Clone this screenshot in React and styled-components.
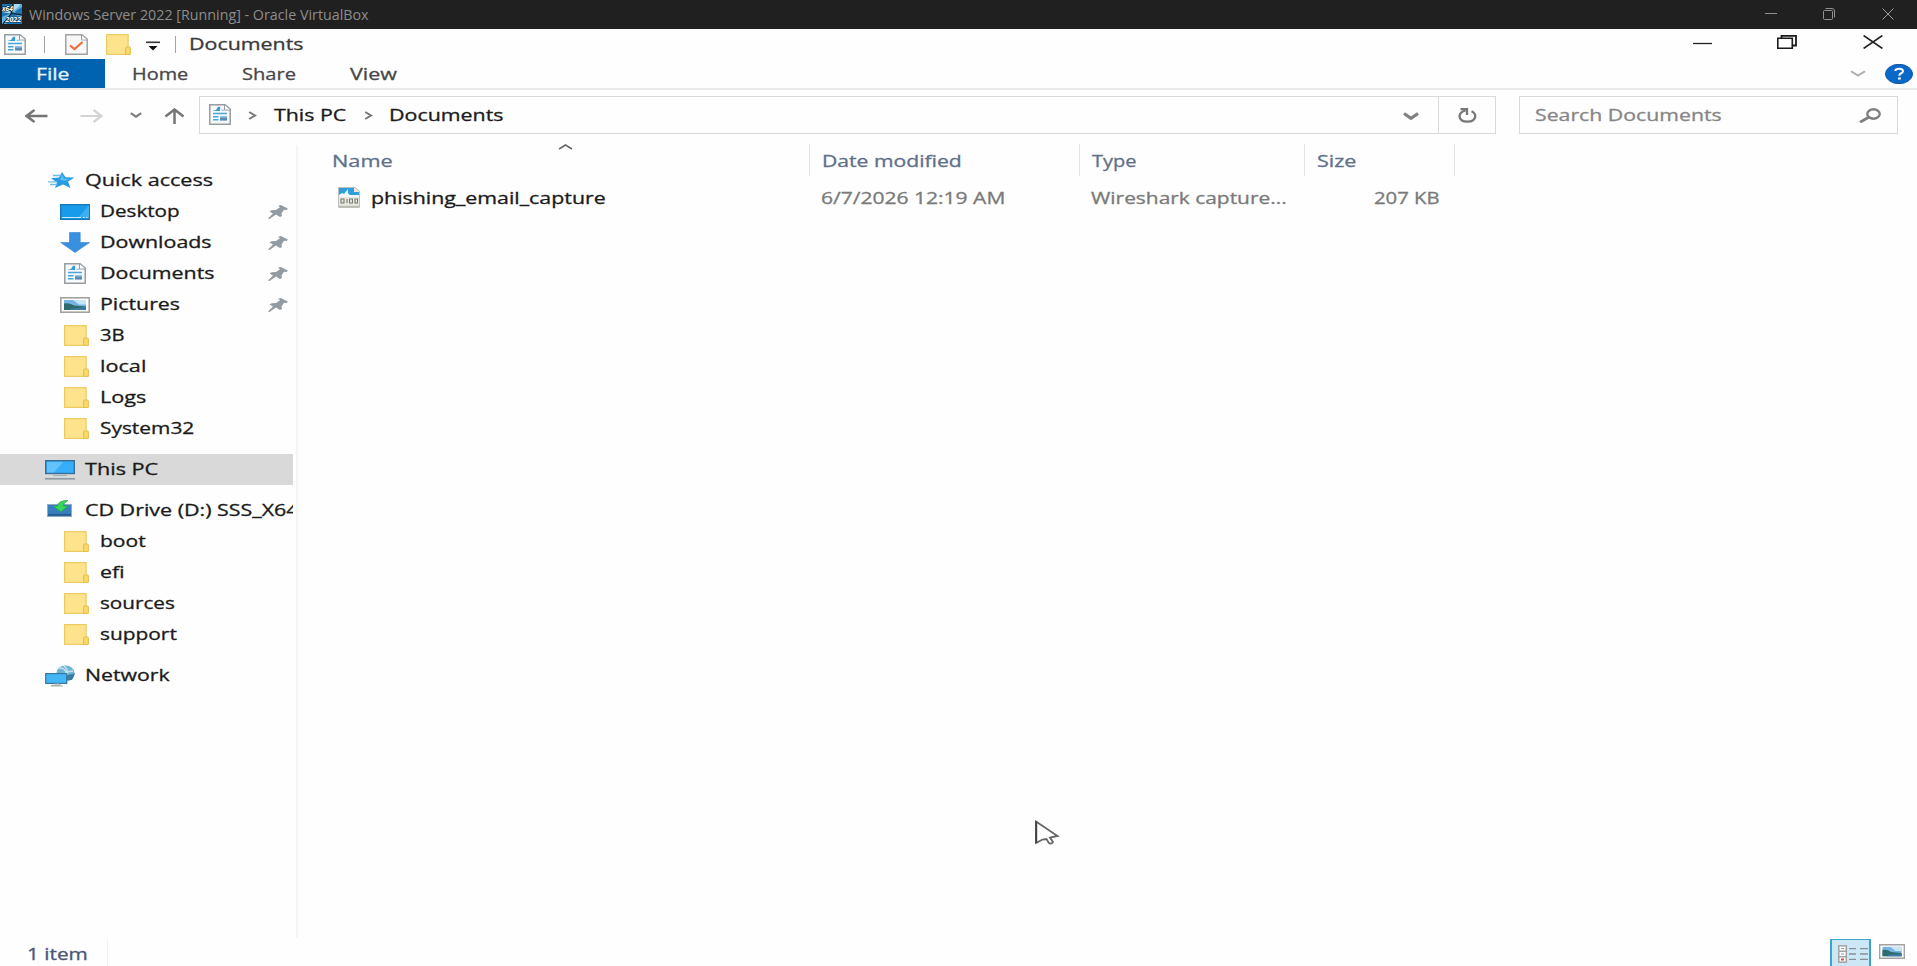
import React, { useLayoutEffect, useRef, useState } from 'react';
import styled, { createGlobalStyle } from 'styled-components';

const Global = createGlobalStyle`
  html, body { margin: 0; padding: 0; background: #fff; overflow: hidden; }
  * { box-sizing: border-box; }
`;

const Screen = styled.div`
  width: 1917px;
  height: 966px;
  display: flex;
  flex-direction: column;
  overflow: hidden;
  background: #fefefe;
  font-family: "Open Sans", "Noto Sans", sans-serif;
  font-size: 16px;
  color: #1b1b1b;
`;

/* Text of the guest display, which is wider than it is tall */
const LabelBox = styled.span`
  display: block;
  flex: none;
  width: ${(p) => p.$w}px;
  height: 22px;
  line-height: 22px;
  margin-left: ${(p) => p.$ml || 0}px;
  margin-bottom: ${(p) => p.$lift ?? 2}px;
  color: ${(p) => p.$color || 'inherit'};
  -webkit-text-stroke: ${(p) => (p.$thin ? 0 : 0.3)}px currentColor;
  white-space: nowrap;
`;
const LabelText = styled.span`
  display: inline-block;
  transform-origin: 0 50%;
`;
function Label({ w, ml, lift, color, thin, children }) {
  const ref = useRef(null);
  const [scale, setScale] = useState(1);
  useLayoutEffect(() => {
    setScale(w / ref.current.offsetWidth);
  }, [w]);
  return (
    <LabelBox $w={w} $ml={ml} $lift={lift} $color={color} $thin={thin}>
      <LabelText ref={ref} style={{ transform: `scaleX(${scale})` }}>{children}</LabelText>
    </LabelBox>
  );
}

const Svg = styled.svg`
  display: block;
  flex: none;
  width: ${(p) => p.$w}px;
  height: ${(p) => p.$h}px;
  margin-left: ${(p) => p.$ml || 0}px;
  margin-top: ${(p) => p.$mt || 0}px;
`;
function Icon({ w, h, ml, mt, box, children }) {
  return (
    <Svg $w={w} $h={h} $ml={ml} $mt={mt} viewBox={box || `0 0 ${w} ${h}`} preserveAspectRatio="none" fill="none">
      {children}
    </Svg>
  );
}

const HostBar = styled.header`
  height: 29px;
  flex: none;
  display: flex;
  align-items: center;
  padding: 0 23px 1px 2px;
  background: #202020;
  font-size: 15px;
`;
const Spacer = styled.div`flex: 1;`;
const Gap = styled.div`
  flex: none;
  width: ${(p) => p.$w}px;
`;
const QuickBar = styled.div`
  height: 30px;
  flex: none;
  display: flex;
  align-items: center;
  padding: 0 34px 0 4px;
`;
const Divider = styled.i`
  flex: none;
  width: 1px;
  height: ${(p) => p.$h}px;
  margin-left: ${(p) => p.$ml}px;
  background: ${(p) => p.$color || '#a3a3a3'};
`;
const Tabs = styled.nav`
  height: 31px;
  flex: none;
  display: flex;
  align-items: center;
  padding-right: 4px;
  border-bottom: 2px solid #e9e9e9;
  color: #484848;
`;
const FileTab = styled.div`
  width: 105px;
  height: 29px;
  display: flex;
  align-items: center;
  background: #0063b1;
  color: #e8f2fa;
`;
const NavRow = styled.div`
  height: 51px;
  flex: none;
  display: flex;
  align-items: center;
  padding: 0 20px 2px 25px;
`;
const Box = styled.div`
  height: 38px;
  width: ${(p) => p.$w}px;
  margin-left: ${(p) => p.$ml}px;
  flex: none;
  display: flex;
  align-items: center;
  border: 1.5px solid #d9d9d9;
`;
const Refresh = styled.div`
  align-self: stretch;
  width: 57px;
  display: flex;
  align-items: center;
  border-left: 1px solid #d9d9d9;
`;
const Main = styled.main`
  height: 797px;
  flex: none;
  display: flex;
`;
const Sidebar = styled.aside`
  width: 298px;
  margin-top: 4px;
  padding-top: 20px;
  border-right: 2px solid #f5f5f5;
`;
const TreeRow = styled.div`
  width: 293px;
  height: 31px;
  display: flex;
  align-items: center;
  overflow: hidden;
  margin-top: ${(p) => (p.$group ? 10 : 0)}px;
  background: ${(p) => (p.$active ? '#d9d9d9' : 'none')};
`;
const IconSlot = styled.div`
  width: ${(p) => (p.$root ? 39.5 : 39.5)}px;
  margin-left: ${(p) => (p.$root ? 45 : 60)}px;
  flex: none;
`;
const PinSlot = styled.div`
  margin-left: auto;
  margin-right: 5px;
`;
const List = styled.section`flex: 1;`;
const HeadRow = styled.div`
  height: 32px;
  margin-top: 3px;
  display: flex;
  color: #5f708a;
`;
const HeadCell = styled.div`
  width: ${(p) => p.$w}px;
  padding-left: ${(p) => p.$pad}px;
  display: flex;
  align-items: center;
  border-right: 1.5px solid #e4e4e4;
`;
const Caret = styled.div`
  align-self: flex-start;
  margin-left: 165px;
`;
const FileRow = styled.div`
  height: 43px;
  display: flex;
  align-items: center;
  padding-left: 40px;
`;
const Status = styled.footer`
  height: 28px;
  flex: none;
  display: flex;
  padding-left: 27px;
  color: #4a5578;
`;
const ItemCount = styled.div`padding-top: 5px;`;
const DetailsButton = styled.div`
  width: 41px;
  height: 30px;
  margin-top: 1px;
  padding: 5px 0 0 6px;
  background: #cce8f6;
  border: 2px solid #3ca3cb;
  border-top-width: 1px;
`;
const Thumb = styled.div`padding: 6px 12px 0 8px;`;
const Pointer = styled.div`
  position: absolute;
  left: 1034px;
  top: 819px;
`;

const DocIcon = (p) => (
  <Icon w={22} h={21} {...p}>
    <path d="M.8.8H16L21.2 5V20.2H.8Z" fill="#f7f9fa" stroke="#989da0" strokeWidth="1.5" />
    <path d="M15.5 1v5h5.5" stroke="#989da0" fill="#fff" />
    <path d="M4 6.8 7 6 9 2.8h2.2L11 7H4Z" fill="#3a9bd9" />
    <path d="M12.5 6.3h3" stroke="#8cc6ea" strokeWidth="1.2" />
    <path d="M4 9.5h14M4 12.8h5.5M4 15.8h5.5" stroke="#4aa5db" strokeWidth="1.6" />
    <rect x="11" y="12" width="7" height="4.6" fill="#5a8db6" />
    <path d="M11 12h7v1.6h-7Z" fill="#8fc3e8" />
  </Icon>
);
const Folder = (p) => (
  <Icon w={25} h={21} {...p}>
    <rect x=".6" y=".6" width="21.5" height="19.8" fill="#fde38c" stroke="#eccb62" strokeWidth="1.2" />
    <path d="M19.6 20.4V14q0-1 1-1h2.8q1 0 1 1v6.4Z" fill="#f9d86e" stroke="#e6bd48" />
  </Icon>
);
const Star = () => (
  <Icon w={27} h={17} ml={3} mt={-1}>
    <path d="M14 0 17.5 5.2 26.5 5.5 20 9.5 22.5 16 15 12.6 7 16 9 10.5 3 6.3 11 5.6Z" fill="#279be3" />
    <path d="M5 3.5h8M0 9.8h9M2 12.5h7" stroke="#6dbdeb" strokeWidth="1.3" />
    <path d="M14 2 16 6.5 22 7 17 9 12 8Z" fill="#5bbbf3" />
  </Icon>
);
const Desktop = () => (
  <Icon w={30} h={16}>
    <rect x=".7" y=".7" width="28.6" height="14.6" fill="#179bea" stroke="#1778bd" strokeWidth="1.4" />
    <path d="M29 1 18 14h11Z" fill="#3db0f4" />
    <path d="M2 13.5h19M23 13.5h1.5M26 13.5h1.5" stroke="#c9ecff" strokeWidth="1" />
  </Icon>
);
const Download = () => (
  <Icon w={30} h={21}>
    <path d="M9.5.5h10.7v10H29.5L15 20.5.7 10.5h8.8Z" fill="#3b8fdf" stroke="#3384d1" strokeWidth=".6" />
  </Icon>
);
const Picture = ({ w = 30, h = 16, ...p }) => (
  <Icon w={w} h={h} box="0 0 30 16" {...p}>
    <rect x=".8" y=".8" width="28.4" height="14.4" fill="#fff" stroke="#a2a2a2" strokeWidth="1.6" />
    <rect x="4" y="3" width="22" height="10" fill="#77b4e4" />
    <path d="M13 3h13v4.5H19Z" fill="#c9e4f7" />
    <path d="M4 6.5Q9 5.5 14 8.5L26 9.5V13H4Z" fill="#2e6b6c" />
    <path d="M12 11.5 26 10v3H9Z" fill="#3d79a6" />
  </Icon>
);
const Pc = () => (
  <Icon w={30} h={20}>
    <rect x=".7" y=".7" width="28.6" height="12.8" fill="#36aefa" stroke="#386f94" strokeWidth="1.4" />
    <path d="M2 2h16L9 12.5H2Z" fill="#64c2fb" />
    <path d="M8 15.5h14" stroke="#a3b2bb" strokeWidth="1.2" />
    <path d="M0 18.8h30" stroke="#80919c" strokeWidth="1.4" />
  </Icon>
);
const Disc = () => (
  <Icon w={25} h={17} ml={2} mt={-4}>
    <rect x=".5" y="4.5" width="24" height="12" fill="#397fc0" stroke="#8eacc4" />
    <path d="M1 14.8h23" stroke="#275b91" strokeWidth="2" />
    <path d="M21 .5Q11 .5 10.5 6H6l8 6 7-6h-4.5Q16 3 21 .5Z" fill="#35d75b" stroke="#219e46" strokeWidth=".7" />
  </Icon>
);
const NetworkIcon = () => (
  <Icon w={31} h={22}>
    <ellipse cx="20.5" cy="8.5" rx="9.2" ry="8" fill="#6fb3d4" />
    <path d="M14 3q6 0 7 4l7-1M19 1q5 4 3 9l3 5" stroke="#c3e0ec" strokeWidth="1.6" />
    <path d="M22 10 30 8.5 27 15h-5Z" fill="#3b7ca4" />
    <rect x=".7" y="8.6" width="21" height="9.8" fill="#43b6f6" stroke="#3279a5" strokeWidth="1.2" />
    <path d="M9 19h6v1.3H6M6 21h12" stroke="#a0a9ad" />
  </Icon>
);
const Pin = () => (
  <Icon w={20} h={14}>
    <path d="M10 .8 13 0 20 3.8 18.5 5 16 4.8 13.5 8.5 14 11 12 12 8 9.6 1.5 14 0 13.4 5 8.4 1.5 6.5 3.5 5.2 8 5 12 2.3Z" fill="#929ba1" />
  </Icon>
);
const CaptureIcon = () => (
  <Icon w={22} h={21}>
    <path d="M.5.5H17L21.5 4V20.5H.5Z" fill="#e9e8df" stroke="#bcc0bd" />
    <path d="M1 1H16V5h5v5H1Z" fill="#2f9eda" />
    <path d="M1 10V8l3-2 2 1 4-5q-1 5 2 6h9v2Z" fill="#f4fbff" />
    <path d="M3 12h3v4H3ZM9 12v4M11.5 12h3v4h-3ZM17 12h2.5v4H17Z" stroke="#777b75" strokeWidth="1.1" />
    <path d="M1 19.5h20" stroke="#bdbcb0" strokeWidth="1.5" />
  </Icon>
);
const Chevron = ({ w, h, color = '#808080', sw = 2.2, ...p }) => (
  <Icon w={w} h={h} box="0 0 16 8" {...p}>
    <path d="M1 1.5 8 6.3 15 1.5" stroke={color} strokeWidth={sw} />
  </Icon>
);
const Crumb = ({ ml }) => (
  <Icon w={9} h={9} ml={ml} mt={2}>
    <path d="M1.2 1 7 4.5 1.2 8" stroke="#777" strokeWidth="2" />
  </Icon>
);

const tree = [
  { text: 'Quick access', w: 128, icon: Star, root: true },
  { text: 'Desktop', w: 80, icon: Desktop, pin: true },
  { text: 'Downloads', w: 111, icon: Download, pin: true },
  { text: 'Documents', w: 115, icon: DocIcon, pin: true, ml: 4 },
  { text: 'Pictures', w: 80, icon: Picture, pin: true },
  { text: '3B', w: 24, icon: Folder, ml: 4 },
  { text: 'local', w: 46, icon: Folder, ml: 4 },
  { text: 'Logs', w: 46, icon: Folder, ml: 4 },
  { text: 'System32', w: 94, icon: Folder, ml: 4 },
  { text: 'This PC', w: 73, icon: Pc, root: true, group: true, active: true },
  { text: 'CD Drive (D:) SSS_X64', w: 213, icon: Disc, root: true, group: true },
  { text: 'boot', w: 46, icon: Folder, ml: 4 },
  { text: 'efi', w: 24, icon: Folder, ml: 4 },
  { text: 'sources', w: 75, icon: Folder, ml: 4 },
  { text: 'support', w: 77, icon: Folder, ml: 4 },
  { text: 'Network', w: 85, icon: NetworkIcon, root: true, group: true },
];

function TreeItem({ item }) {
  const Glyph = item.icon;
  return (
    <TreeRow $group={item.group} $active={item.active}>
      <IconSlot $root={item.root}><Glyph ml={item.ml} /></IconSlot>
      <Label w={item.w}>{item.text}</Label>
      {item.pin && <PinSlot><Pin /></PinSlot>}
    </TreeRow>
  );
}

export default function App() {
  return (
    <Screen>
      <Global />
      <HostBar>
        <Icon w={20} h={20}>
          <rect width="20" height="20" fill="#1d77b5" />
          <path d="M0 8 11 10 19 0H12L9 7 0 5Z" fill="#a9dcf4" />
          <path d="M0 13 10 9 20 14V11L12 8 20 3V0L10 8 4 20H0Z" fill="#63b6e2" />
          <path d="M11 0 9 10 1 20M9 9 20 11" stroke="#0a1f30" strokeWidth="1.3" />
          <text x="0" y="6.5" fontSize="7" fontWeight="700" fontStyle="italic" fill="#fff" stroke="#111" strokeWidth="1.2" paintOrder="stroke" textLength="11" lengthAdjust="spacingAndGlyphs">x64</text>
          <text x="3.5" y="17.5" fontSize="7" fontWeight="700" fontStyle="italic" fill="#fff" stroke="#123a66" strokeWidth="1" paintOrder="stroke" textLength="15.5" lengthAdjust="spacingAndGlyphs">2022</text>
        </Icon>
        <Label w={340} ml={7} lift={0} thin color="#8d8d8d">Windows Server 2022 [Running] - Oracle VirtualBox</Label>
        <Spacer />
        <Icon w={12} h={12}><path d="M0 5.5h12" stroke="#919191" /></Icon>
        <Icon w={12} h={12} ml={46}>
          <rect x=".5" y="2.5" width="9" height="9" rx="1" stroke="#919191" />
          <path d="M2.5.5H9q2.5 0 2.5 2.5V9.5" stroke="#919191" />
        </Icon>
        <Icon w={12} h={12} ml={47}><path d="M.5.5 11.5 11.5M11.5.5.5 11.5" stroke="#9a9a9a" /></Icon>
      </HostBar>

      <QuickBar>
        <DocIcon />
        <Divider $h={17} $ml={18} />
        <Icon w={23} h={21} ml={20}>
          <path d="M.8.8H17L22.2 5V20.2H.8Z" fill="#f7f7f8" stroke="#a0a2a4" strokeWidth="1.5" />
          <path d="M16.5 1v5H22" fill="#fff" stroke="#a0a2a4" />
          <path d="M5 11.5 9.5 15 17.5 8" stroke="#ef6d3b" strokeWidth="2.2" />
        </Icon>
        <Folder ml={18} />
        <Icon w={14} h={10} ml={15} mt={3}>
          <path d="M0 1.3h14" stroke="#333" strokeWidth="1.6" />
          <path d="M2.5 5h9L7 9.5Z" fill="#111" />
        </Icon>
        <Divider $h={17} $ml={15} />
        <Label w={115} ml={13} lift={0} color="#3a3a3a">Documents</Label>
        <Spacer />
        <Icon w={19} h={14} mt={-3}><path d="M0 7.5h19" stroke="#222" strokeWidth="1.3" /></Icon>
        <Icon w={20} h={14} ml={65} mt={-4}>
          <path d="M.8 3.3h14.5v10H.8Z" stroke="#1b1b1b" strokeWidth="1.6" />
          <path d="M4.5 3V.8H19V10.5H16" stroke="#1b1b1b" strokeWidth="1.8" />
        </Icon>
        <Icon w={20} h={14} ml={66} mt={-4}><path d="M.6.5 19.4 13.5M19.4.5.6 13.5" stroke="#222" strokeWidth="1.6" /></Icon>
      </QuickBar>

      <Tabs>
        <FileTab><Label w={33} ml={36} lift={0}>File</Label></FileTab>
        <Label w={56} ml={27} lift={0}>Home</Label>
        <Label w={54} ml={54} lift={0}>Share</Label>
        <Label w={47} ml={54} lift={0}>View</Label>
        <Spacer />
        <Chevron w={16} h={7} color="#b0b0b0" sw={2.2} />
        <Icon w={28} h={20} ml={19}>
          <ellipse cx="14" cy="10" rx="13.5" ry="9.7" fill="#0969c9" stroke="#0757a4" />
          <path d="M10.3 7Q10.3 4.7 14.3 4.7 18 4.7 18 7.2 18 8.5 15.8 9.5 14.3 10.2 14.3 11.8" stroke="#fff" strokeWidth="2" />
          <rect x="13" y="13.5" width="2.8" height="2" fill="#fff" />
        </Icon>
      </Tabs>

      <NavRow>
        <Icon w={23} h={14} mt={2}><path d="M22.5 7H2M9.5 1 1.5 7l8 6" stroke="#757575" strokeWidth="2.5" /></Icon>
        <Icon w={23} h={14} ml={32} mt={2}><path d="M.5 7H21M13.5 1l8 6-8 6" stroke="#d4d4d4" strokeWidth="2.2" /></Icon>
        <Chevron w={12} h={6} ml={27} sw={3} />
        <Icon w={21} h={16} ml={22} mt={3}><path d="M10.5 16V2M1.5 8.5l9-7 9 7" stroke="#757575" strokeWidth="2.5" /></Icon>
        <Box $w={1297} $ml={14}>
          <DocIcon ml={9} />
          <Crumb ml={17} />
          <Label w={72} ml={17} lift={-1}>This PC</Label>
          <Crumb ml={18} />
          <Label w={115} ml={16} lift={-1}>Documents</Label>
          <Spacer />
          <Chevron w={16} h={8} sw={3.2} mt={2} />
          <Gap $w={19} />
          <Refresh>
            <Icon w={19} h={15} ml={19} mt={1}>
              <path d="M13.5 3.2Q17.5 5 17.3 8.5 16.5 13.6 9.5 13.7 2 13.4 1.5 8.3 1.8 4 7.5 2.5" stroke="#777" strokeWidth="2.3" />
              <path d="M2.5 1.2H9V7" stroke="#777" strokeWidth="2.3" />
            </Icon>
          </Refresh>
        </Box>
        <Box $w={379} $ml={23}>
          <Label w={186} ml={15} lift={-1} color="#868686">Search Documents</Label>
          <Spacer />
          <Icon w={22} h={15} mt={2}>
            <ellipse cx="14.5" cy="6" rx="6.2" ry="4.7" stroke="#808080" strokeWidth="2.4" />
            <path d="M9.8 9.2 1 14.2" stroke="#808080" strokeWidth="2.8" />
          </Icon>
          <Gap $w={16} />
        </Box>
      </NavRow>

      <Main>
        <Sidebar>
          {tree.map((item) => <TreeItem key={item.text} item={item} />)}
        </Sidebar>
        <List>
          <HeadRow>
            <HeadCell $w={512} $pad={34}>
              <Label w={61} lift={-1}>Name</Label>
              <Caret><Icon w={15} h={6}><path d="M1 5 7.5 1 14 5" stroke="#666" strokeWidth="1.5" /></Icon></Caret>
            </HeadCell>
            <HeadCell $w={270} $pad={12}><Label w={140} lift={-1}>Date modified</Label></HeadCell>
            <HeadCell $w={225} $pad={12}><Label w={45} lift={-1}>Type</Label></HeadCell>
            <HeadCell $w={150} $pad={12}><Label w={39} lift={-1}>Size</Label></HeadCell>
          </HeadRow>
          <FileRow>
            <CaptureIcon />
            <Label w={235} ml={11} lift={-1}>phishing_email_capture</Label>
            <Label w={184} ml={215} lift={-1} color="#7a7a7a">6/7/2026 12:19 AM</Label>
            <Label w={196} ml={86} lift={-1} color="#7a7a7a">Wireshark capture...</Label>
            <Label w={66} ml={87} lift={-1} color="#7a7a7a">207 KB</Label>
          </FileRow>
        </List>
      </Main>

      <Status>
        <ItemCount><Label w={61} lift={0}>1 item</Label></ItemCount>
        <Divider $h={28} $ml={19} $color="#f3f3f3" />
        <Spacer />
        <DetailsButton>
          <Icon w={31} h={18}>
            <rect x=".8" y=".8" width="7.5" height="16.4" fill="#fff" stroke="#a2a2a2" strokeWidth="1.5" />
            <path d="M1 6.3h7M1 11.8h7" stroke="#a2a2a2" strokeWidth="1.4" />
            <path d="M3 3.6h3M3 9h3" stroke="#7f9db4" />
            <path d="M3 14.5h3" stroke="#e04b4b" strokeWidth="2" />
            <path d="M11 3.6h7M22 3.6h8M11 9h7M22 9h8M11 14.3h7M22 14.3h8" stroke="#858f94" strokeWidth="1.3" />
          </Icon>
        </DetailsButton>
        <Thumb><Picture w={26} h={15} /></Thumb>
      </Status>

      <Pointer>
        <Icon w={26} h={26} mt={1}>
          <path d="M2 1.5V23L8.5 19.5 12.5 19 14.5 22.5Q17 25 19 22L16 17.5 23.5 16Z" fill="#fff" stroke="#666" strokeWidth="1.8" />
          <path d="M2.2 1.5V23" stroke="#444" strokeWidth="2" />
        </Icon>
      </Pointer>
    </Screen>
  );
}
